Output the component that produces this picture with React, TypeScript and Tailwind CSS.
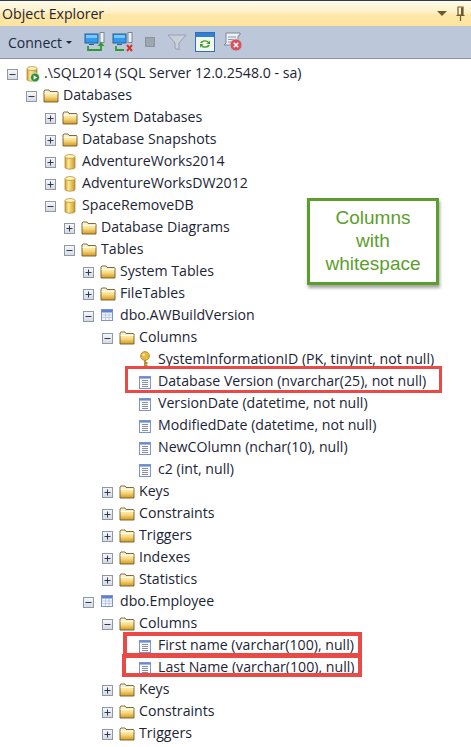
import type { ReactNode } from "react";

type Kind = "folder" | "db" | "table" | "column" | "key" | "server";

interface Node {
  level: number;
  label: string;
  icon: Kind;
  open?: boolean;
}

const NODES: Node[] = [
  { level: 0, label: ".\\SQL2014 (SQL Server 12.0.2548.0 - sa)", icon: "server", open: true },
  { level: 1, label: "Databases", icon: "folder", open: true },
  { level: 2, label: "System Databases", icon: "folder", open: false },
  { level: 2, label: "Database Snapshots", icon: "folder", open: false },
  { level: 2, label: "AdventureWorks2014", icon: "db", open: false },
  { level: 2, label: "AdventureWorksDW2012", icon: "db", open: false },
  { level: 2, label: "SpaceRemoveDB", icon: "db", open: true },
  { level: 3, label: "Database Diagrams", icon: "folder", open: false },
  { level: 3, label: "Tables", icon: "folder", open: true },
  { level: 4, label: "System Tables", icon: "folder", open: false },
  { level: 4, label: "FileTables", icon: "folder", open: false },
  { level: 4, label: "dbo.AWBuildVersion", icon: "table", open: true },
  { level: 5, label: "Columns", icon: "folder", open: true },
  { level: 6, label: "SystemInformationID (PK, tinyint, not null)", icon: "key" },
  { level: 6, label: "Database Version (nvarchar(25), not null)", icon: "column" },
  { level: 6, label: "VersionDate (datetime, not null)", icon: "column" },
  { level: 6, label: "ModifiedDate (datetime, not null)", icon: "column" },
  { level: 6, label: "NewCOlumn (nchar(10), null)", icon: "column" },
  { level: 6, label: "c2 (int, null)", icon: "column" },
  { level: 5, label: "Keys", icon: "folder", open: false },
  { level: 5, label: "Constraints", icon: "folder", open: false },
  { level: 5, label: "Triggers", icon: "folder", open: false },
  { level: 5, label: "Indexes", icon: "folder", open: false },
  { level: 5, label: "Statistics", icon: "folder", open: false },
  { level: 4, label: "dbo.Employee", icon: "table", open: true },
  { level: 5, label: "Columns", icon: "folder", open: true },
  { level: 6, label: "First name (varchar(100), null)", icon: "column" },
  { level: 6, label: "Last Name (varchar(100), null)", icon: "column" },
  { level: 5, label: "Keys", icon: "folder", open: false },
  { level: 5, label: "Constraints", icon: "folder", open: false },
  { level: 5, label: "Triggers", icon: "folder", open: false },
];

const LEVEL_PADDING = [
  "pl-[7px]",
  "pl-[26px]",
  "pl-[45px]",
  "pl-[64px]",
  "pl-[83px]",
  "pl-[102px]",
  "pl-[121px]",
];

function Expander({ open }: { open: boolean }) {
  return (
    <svg width="11" height="11" viewBox="0 0 11 11" className="shrink-0">
      <defs>
        <linearGradient id="exp" x1="0" y1="0" x2="0" y2="1">
          <stop offset="0" stopColor="#f7f8fa" />
          <stop offset="1" stopColor="#d5d9e0" />
        </linearGradient>
      </defs>
      <rect x="0.5" y="0.5" width="10" height="10" fill="url(#exp)" stroke="#8f98a6" />
      <path d="M2.5 5.5h6" stroke="#2c3a58" />
      {!open && <path d="M5.5 2.5v6" stroke="#2c3a58" />}
    </svg>
  );
}

function FolderIcon() {
  return (
    <svg width="16" height="14" viewBox="0 0 16 14" className="shrink-0">
      <defs>
        <linearGradient id="fold" x1="0" y1="0" x2="0" y2="1">
          <stop offset="0" stopColor="#fffbe6" />
          <stop offset="0.5" stopColor="#fbe08c" />
          <stop offset="1" stopColor="#d49a22" />
        </linearGradient>
      </defs>
      <path d="M1 3V1.800L2 1h4l1 1.500h7.500l.5.600V13H1z" fill="url(#fold)" stroke="#6f5a2c" strokeWidth="0.9" />
      <path d="M1.600 4.500h12.800" stroke="#fffdf0" strokeWidth="1" />
    </svg>
  );
}

function DbIcon({ badge }: { badge?: boolean }) {
  return (
    <svg width="16" height="18" viewBox="0 0 16 18" className="shrink-0">
      <defs>
        <linearGradient id="cyl" x1="0" y1="0" x2="1" y2="0">
          <stop offset="0" stopColor="#cf9f2e" />
          <stop offset="0.35" stopColor="#ffe88f" />
          <stop offset="1" stopColor="#c8972a" />
        </linearGradient>
      </defs>
      <path d="M3 3.500v11c0 2.200 10 2.200 10 0v-11z" fill="url(#cyl)" stroke="#a97f27" strokeWidth="0.7" />
      <ellipse cx="8" cy="3.500" rx="5" ry="2" fill="#fff3b8" stroke="#b08a30" strokeWidth="0.7" />
      {badge && (
        <>
          <circle cx="11" cy="12.500" r="4.500" fill="#2f8f35" stroke="#e9f5e0" strokeWidth="0.8" />
          <path d="M9.600 10.200v4.600l3.600-2.300z" fill="#fff" />
        </>
      )}
    </svg>
  );
}

function TableIcon() {
  return (
    <svg width="12" height="12" viewBox="0 0 12 12" className="-ml-[2px] -mt-[2px] shrink-0">
      <rect x="0.5" y="0.5" width="11" height="11" fill="#f3f6fd" stroke="#7d93cc" />
      <rect x="1" y="1" width="10" height="2.500" fill="#5f7fd0" />
      <path d="M1 6h10M1 8.500h10M4.500 3.500V11M8 3.500V11" stroke="#b4c1e2" strokeWidth="0.8" />
    </svg>
  );
}

function ColumnIcon() {
  return (
    <svg width="12" height="13" viewBox="0 0 12 13" className="-ml-[2px] shrink-0">
      <rect x="0.5" y="0.5" width="11" height="12" fill="#fafbfe" stroke="#7d93cc" />
      <rect x="1" y="1" width="10" height="1.600" fill="#6b88d4" />
      <path d="M3 4.500h6M3 6.500h6M3 8.500h6M3 10.500h6" stroke="#7a818e" strokeWidth="0.9" />
    </svg>
  );
}

function KeyIcon() {
  return (
    <svg width="12" height="18" viewBox="0 0 12 18" className="-ml-[2px] shrink-0">
      <circle cx="6" cy="5" r="4.400" fill="#e8b93c" stroke="#a9801f" strokeWidth="0.8" />
      <circle cx="4.800" cy="3.600" r="1.200" fill="#fff3bf" />
      <path d="M6 9v8M6 12h2.500M6 14.500h2.500" stroke="#b08a2a" strokeWidth="1.800" />
    </svg>
  );
}

function NodeIcon({ kind }: { kind: Kind }) {
  switch (kind) {
    case "folder":
      return <FolderIcon />;
    case "db":
      return <DbIcon />;
    case "server":
      return <DbIcon badge />;
    case "table":
      return <TableIcon />;
    case "column":
      return <ColumnIcon />;
    default:
      return <KeyIcon />;
  }
}

function TreeRow({ node }: { node: Node }) {
  const isLeaf = node.open === undefined;
  return (
    <div className={`flex h-[22px] items-center ${LEVEL_PADDING[node.level]}`}>
      <span className="flex w-[11px] shrink-0 items-center">
        {!isLeaf && <Expander open={!!node.open} />}
      </span>
      <span className="flex w-[26px] shrink-0 items-center justify-center pl-[1px]">
        <NodeIcon kind={node.icon} />
      </span>
      <span className="whitespace-nowrap pb-[1px] text-[14.15px] leading-none text-[#1c2534]">{node.label}</span>
    </div>
  );
}

function ToolButton({ children }: { children: ReactNode }) {
  return <span className="flex h-[22px] w-[28px] items-center justify-center">{children}</span>;
}

// little monitor + tower used by the connect / disconnect buttons
function Computer() {
  return (
    <>
      <rect x="1" y="2" width="13" height="9" fill="#2f9bf0" stroke="#25608f" />
      <path d="M2 3h11v3H2z" fill="#7cc7fa" />
      <path d="M5 12h5v1H5z" fill="#25608f" />
      <rect x="16" y="0.500" width="4" height="10" fill="#eef2f6" stroke="#7c8798" />
    </>
  );
}

function Toolbar() {
  return (
    <div className="flex h-[33px] items-center border-b border-[#8c939e] bg-[#bcc8da] pl-[8px]">
      <span className="text-[14px] text-[#1b2940]">Connect</span>
      <span className="ml-[4px] mr-[9px] h-0 w-0 border-x-[3px] border-t-[3px] border-x-transparent border-t-[#1b2940]" />
      <ToolButton>
        <svg width="22" height="20" viewBox="0 0 22 20">
          <Computer />
          <path d="M4 14v4h13v-5" fill="none" stroke="#2f9a2f" strokeWidth="1.800" />
          <path d="M13.500 14l3.500-4 3.500 4z" fill="#2f9a2f" />
        </svg>
      </ToolButton>
      <ToolButton>
        <svg width="22" height="20" viewBox="0 0 22 20">
          <Computer />
          <path d="M4 14v4h8" fill="none" stroke="#2f9a2f" strokeWidth="1.800" />
          <path d="M15 13l5 6M20 13l-5 6" stroke="#d8322a" strokeWidth="2" />
        </svg>
      </ToolButton>
      <span className="flex h-[22px] w-[26px] items-center justify-center">
        <span className="h-[10px] w-[10px] border border-[#8a93a0] bg-[#9ea6b2]" />
      </span>
      <ToolButton>
        <svg width="20" height="20" viewBox="0 0 20 20">
          <path d="M1 3h18l-7 8v7l-4-2v-5z" fill="#c9d0da" stroke="#98a1ae" />
        </svg>
      </ToolButton>
      <ToolButton>
        <svg width="20" height="20" viewBox="0 0 20 20">
          <rect x="0.500" y="0.500" width="19" height="19" fill="#f4f7ec" stroke="#2f6fbb" />
          <rect x="1" y="1" width="18" height="4" fill="#2f7fd4" />
          <path d="M5 11a5 4 0 0 1 9-1l1-2v4h-4l2-1a3.500 3 0 0 0-6 0zM15 13a5 4 0 0 1-9 1l-1 2v-4h4l-2 1a3.500 3 0 0 0 6 0z" fill="#3a9a2e" />
        </svg>
      </ToolButton>
      <ToolButton>
        <svg width="21" height="20" viewBox="0 0 21 20">
          <path d="M4 1h14v2l-2 1v9H2l2-2z" fill="#eef1f5" stroke="#7d8796" />
          <path d="M6 5h8M6 7.500h8M6 10h6" stroke="#8e97a5" />
          <circle cx="14" cy="13" r="6" fill="#d9505a" stroke="#b6c0cc" />
          <path d="M11.800 10.800l4.400 4.400M16.200 10.800l-4.400 4.400" stroke="#fff" strokeWidth="1.600" />
        </svg>
      </ToolButton>
    </div>
  );
}

export default function App() {
  return (
    <div className="relative h-[747px] w-[471px] overflow-hidden bg-white font-['Open_Sans','Noto_Sans',sans-serif]">
      {/* Title bar */}
      <div className="flex h-[26px] items-center justify-between border-t border-[#2b3c55] bg-[linear-gradient(#fffbe8_0%,#fff1c8_45%,#ffe7a6_55%,#ffe4a0_100%)] pl-[2px] pr-[6px]">
        <span className="text-[14.15px] text-[#1c2534]">Object Explorer</span>
        <span className="flex items-center gap-[9px]">
          <span className="h-0 w-0 border-x-[5px] border-t-[5px] border-x-transparent border-t-[#6b5a34]" />
          <svg width="9" height="15" viewBox="0 0 9 15">
            <path d="M2 1h5v8H2zM0.500 9.500h8M4.500 10v5" fill="none" stroke="#6b5a34" strokeWidth="1.200" />
            <path d="M5 1.500h2v7.500H5z" fill="#6b5a34" />
          </svg>
        </span>
      </div>

      <Toolbar />

      {/* Tree */}
      <div className="pt-[4px]">
        {NODES.map((node, i) => (
          <TreeRow key={i} node={node} />
        ))}
      </div>

      {/* Annotations drawn over the tree */}
      <div className="absolute left-[125px] top-[366px] h-[27px] w-[317px] border-[3px] border-[#ea4a45]" />
      <div className="absolute left-[123px] top-[632px] h-[25px] w-[239px] border-4 border-[#ea4a45]" />
      <div className="absolute left-[122px] top-[654px] h-[23px] w-[240px] border-4 border-[#ea4a45]" />
      <div className="absolute left-[307px] top-[198px] flex h-[87px] w-[132px] flex-col items-center justify-center border-[3px] border-[#5c9e2b] bg-white pb-[2px] font-['Liberation_Sans',sans-serif] text-[19px] leading-[23px] text-[#5c9e2b] shadow-[1px_3px_3px_rgba(90,90,90,0.55)]">
        <span>Columns</span>
        <span>with</span>
        <span>whitespace</span>
      </div>
    </div>
  );
}
